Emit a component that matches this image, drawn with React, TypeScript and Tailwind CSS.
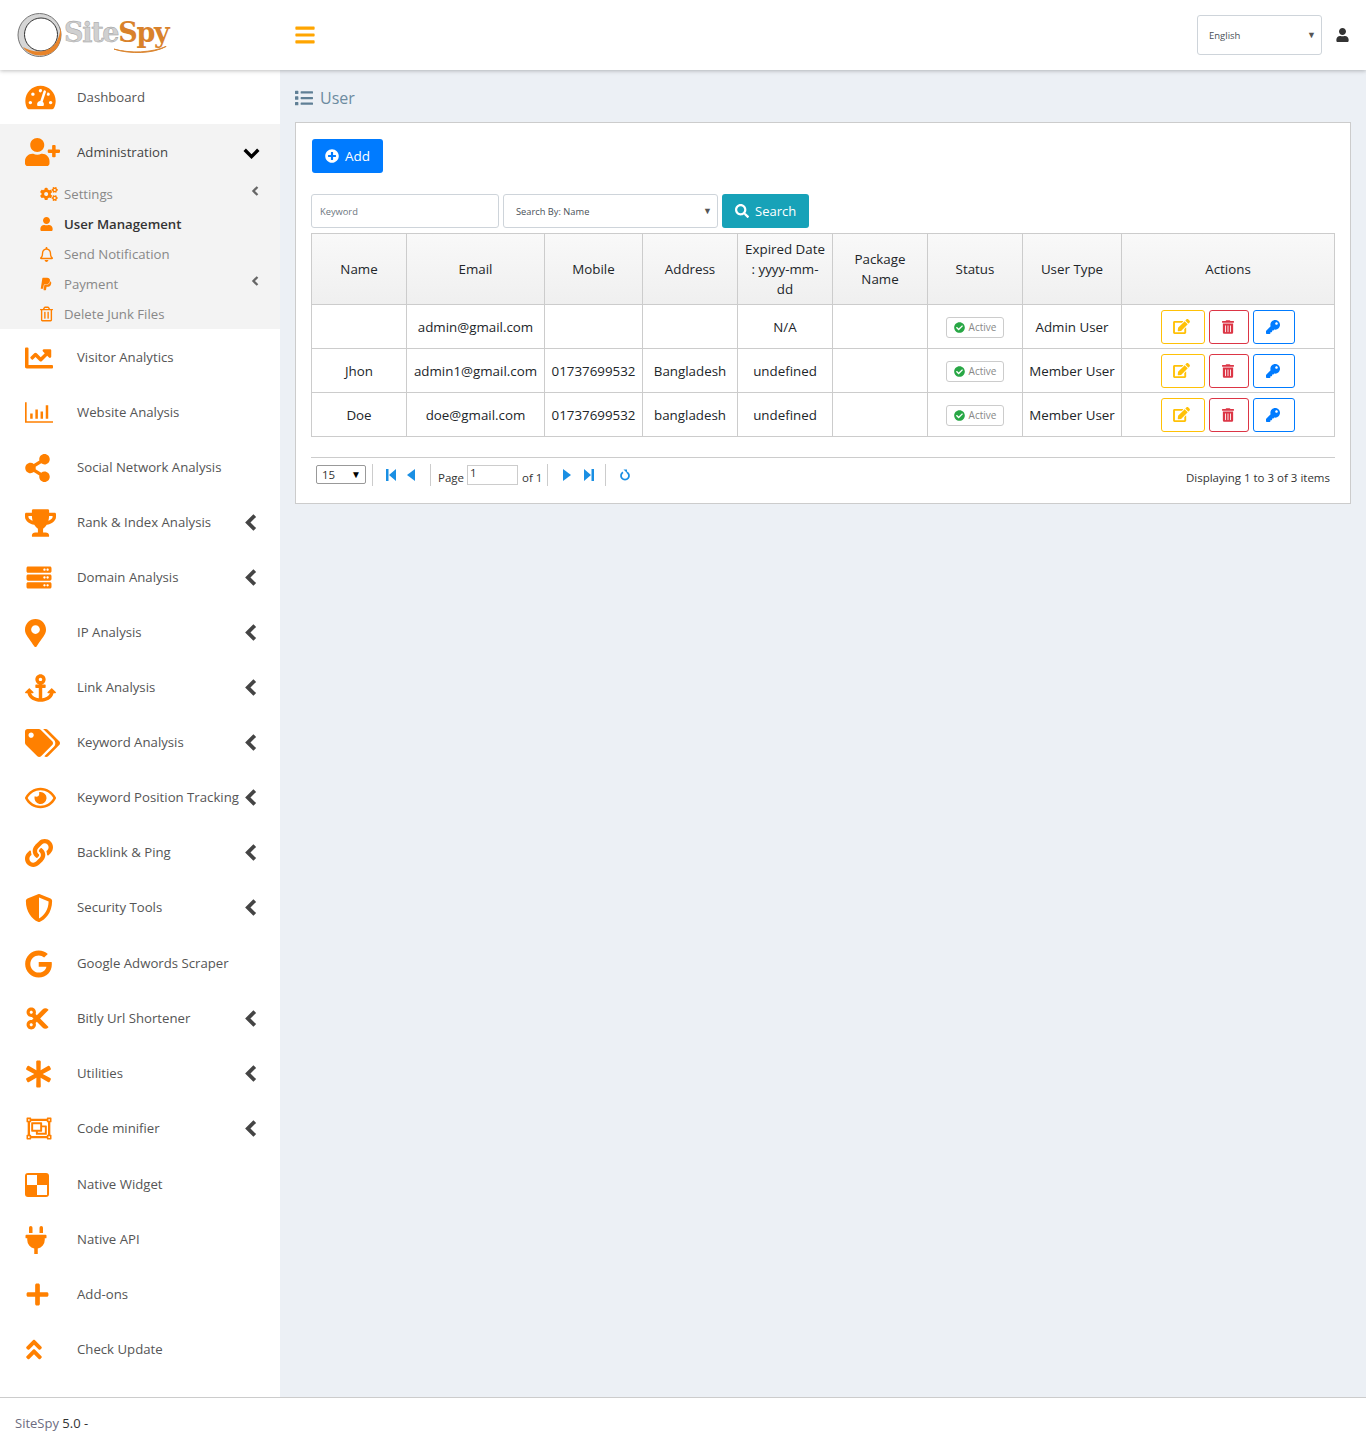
import type { ComponentType, ReactNode } from 'react'
import {
  FaAnchor,
  FaAngleDoubleUp,
  FaAsterisk,
  FaBars,
  FaCheckCircle,
  FaCogs,
  FaCut,
  FaEdit,
  FaRegEye,
  FaGoogle,
  FaKey,
  FaLink,
  FaList,
  FaMapMarkerAlt,
  FaPaypal,
  FaPlug,
  FaPlus,
  FaPlusCircle,
  FaRegBell,
  FaRegObjectGroup,
  FaRegTrashAlt,
  FaSearch,
  FaServer,
  FaShareAlt,
  FaShieldAlt,
  FaTachometerAlt,
  FaTags,
  FaTrashAlt,
  FaTrophy,
  FaUser,
  FaUserPlus,
  FaChartLine,
} from 'react-icons/fa'

type IconType = ComponentType<{ className?: string }>

function BarsIcon({ className }: { className?: string }) {
  return (
    <svg viewBox="0 0 27 20" className={className} fill="currentColor">
      <path d="M0 0h1.6v18.4H27V20H0z" />
      <path d="M5 11h2.4v5H5zM10 7h2.4v9H10zM15 9h2.4v7H15zM20 3h2.4v13H20z" />
    </svg>
  )
}

function CheckerIcon({ className }: { className?: string }) {
  return (
    <svg viewBox="0 0 24 24" className={className}>
      <rect width="24" height="24" rx="3" fill="currentColor" />
      <rect x="2" y="2" width="10" height="10" fill="#fff" />
      <rect x="12" y="12" width="10" height="10" fill="#fff" />
    </svg>
  )
}

function ChevronLeft({ className }: { className?: string }) {
  return (
    <svg viewBox="0 0 12 16" className={className} fill="none" stroke="currentColor" strokeWidth="3.6">
      <path d="M10 1.5 3.5 8l6.5 6.5" />
    </svg>
  )
}

function ChevronDown({ className }: { className?: string }) {
  return (
    <svg viewBox="0 0 16 11" className={className} fill="none" stroke="currentColor" strokeWidth="3.4">
      <path d="M1.2 1.8 8 8.6l6.8-6.8" />
    </svg>
  )
}

function PagerIcon({ d, className }: { d: string; className?: string }) {
  return (
    <svg viewBox="0 0 10 12" className={className} fill="currentColor">
      <path d={d} />
    </svg>
  )
}

function RefreshIcon({ className }: { className?: string }) {
  return (
    <svg viewBox="0 0 12 12" className={className}>
      <path d="M4 3.2a4 4 0 1 0 4 0" fill="none" stroke="currentColor" strokeWidth="1.8" />
      <path d="M4.5 0.5h3.5v3.5z" fill="currentColor" />
    </svg>
  )
}

const menu: { label: string; icon: IconType; size: string; arrow?: boolean; extra?: boolean }[] = [
  { label: 'Visitor Analytics', icon: FaChartLine, size: 'w-[28px] h-[28px]' },
  { label: 'Website Analysis', icon: BarsIcon, size: 'w-[28px] h-[21px]' },
  { label: 'Social Network Analysis', icon: FaShareAlt, size: 'w-[25px] h-[28px]' },
  { label: 'Rank & Index Analysis', icon: FaTrophy, size: 'w-[31px] h-[28px]', arrow: true },
  { label: 'Domain Analysis', icon: FaServer, size: 'w-[28px] h-[25px]', arrow: true },
  { label: 'IP Analysis', icon: FaMapMarkerAlt, size: 'w-[21px] h-[28px]', arrow: true },
  { label: 'Link Analysis', icon: FaAnchor, size: 'w-[31px] h-[28px]', arrow: true },
  { label: 'Keyword Analysis', icon: FaTags, size: 'w-[35px] h-[28px]', arrow: true },
  { label: 'Keyword Position Tracking', icon: FaRegEye, size: 'w-[31px] h-[28px]', arrow: true },
  { label: 'Backlink & Ping', icon: FaLink, size: 'w-[28px] h-[28px]', arrow: true },
  { label: 'Security Tools', icon: FaShieldAlt, size: 'w-[28px] h-[28px]', arrow: true },
  { label: 'Google Adwords Scraper', icon: FaGoogle, size: 'w-[27px] h-[28px]', extra: true },
  { label: 'Bitly Url Shortener', icon: FaCut, size: 'w-[25px] h-[25px]', arrow: true },
  { label: 'Utilities', icon: FaAsterisk, size: 'w-[27px] h-[28px]', arrow: true },
  { label: 'Code minifier', icon: FaRegObjectGroup, size: 'w-[28px] h-[25px]', arrow: true },
  { label: 'Native Widget', icon: CheckerIcon, size: 'w-[24px] h-[24px]', extra: true },
  { label: 'Native API', icon: FaPlug, size: 'w-[22px] h-[28px]' },
  { label: 'Add-ons', icon: FaPlus, size: 'w-[25px] h-[25px]' },
  { label: 'Check Update', icon: FaAngleDoubleUp, size: 'w-[18px] h-[25px]' },
]

const subMenu: { label: string; icon: IconType; size: string; arrow?: boolean; active?: boolean }[] = [
  { label: 'Settings', icon: FaCogs, size: 'w-[18px] h-[14px]', arrow: true },
  { label: 'User Management', icon: FaUser, size: 'w-[13px] h-[14px]', active: true },
  { label: 'Send Notification', icon: FaRegBell, size: 'w-[13px] h-[15px]' },
  { label: 'Payment', icon: FaPaypal, size: 'w-[12px] h-[14px]', arrow: true },
  { label: 'Delete Junk Files', icon: FaRegTrashAlt, size: 'w-[13px] h-[16px]' },
]

const users = [
  { name: '', email: 'admin@gmail.com', mobile: '', address: '', expired: 'N/A', type: 'Admin User' },
  { name: 'Jhon', email: 'admin1@gmail.com', mobile: '01737699532', address: 'Bangladesh', expired: 'undefined', type: 'Member User' },
  { name: 'Doe', email: 'doe@gmail.com', mobile: '01737699532', address: 'bangladesh', expired: 'undefined', type: 'Member User' },
]

function Logo() {
  return (
    <div className="flex items-center">
      <svg viewBox="0 0 46 46" className="w-[46px] h-[46px]">
        <circle cx="22.5" cy="23" r="21.5" fill="#d6d6d6" stroke="#777" strokeWidth="1" />
        <circle cx="24" cy="22.5" r="16.5" fill="#fff" stroke="#333" strokeWidth="1" />
        <path d="M6 35C13 46 34 47 41 34 44 28 45 22 43.500 15 43 26 38 38 24 39.500 17 40 11 38 6 35z" fill="#e8842a" />
      </svg>
      <div className="relative ml-[1px] font-['DejaVu_Serif',serif] text-[27px] leading-none font-bold tracking-[-1.3px] -mt-[6px]">
        <span className="text-[#d0d0d0] [-webkit-text-stroke:0.4px_#999]">Site</span>
        <span className="text-[#d9822b]">Spy</span>
        <svg viewBox="0 0 60 8" className="absolute right-0 -bottom-[8px] w-[54px] h-[8px]">
          <path d="M0 3c18 5 42 4 58-3-14 8-40 9-58 3z" fill="#d9822b" stroke="#d9822b" />
        </svg>
      </div>
    </div>
  )
}

function Th({ children }: { children: ReactNode }) {
  return <th className="border border-[#ccc] px-[7px] font-normal text-[13.35px] leading-[20px]">{children}</th>
}

function Td({ children, plain }: { children?: ReactNode; plain?: boolean }) {
  return (
    <td className={`border border-[#ccc] text-center text-[13.35px] whitespace-nowrap ${plain ? '' : 'pt-[2px]'}`}>
      {children}
    </td>
  )
}

function Sep() {
  return <span className="block w-px h-[22px] bg-[#ccc]" />
}

export default function App() {
  return (
    <div className="flex flex-col w-[1366px] h-[1448px] bg-[#ecf0f5] font-['Open_Sans',sans-serif] text-[#212529]">
      <header className="relative z-10 flex items-center h-[70px] shrink-0 bg-white shadow-[0_1px_4px_rgba(0,0,0,0.25)]">
        <div className="w-[295px] pl-[17px] shrink-0">
          <Logo />
        </div>
        <FaBars className="w-[20px] h-[22px] text-[#ffa500]" />
        <div className="ml-auto flex items-center justify-between w-[125px] h-[40px] pl-[11px] pr-[5px] bg-white border border-[#ced4da] rounded-[3px] text-[9.5px] text-[#495057]">
          <span className="mt-[2px]">English</span>
          <span className="text-[9px] text-[#555]">▼</span>
        </div>
        <FaUser className="w-[13px] h-[14px] ml-[14px] mr-[17px] text-[#333]" />
      </header>

      <div className="flex flex-1 min-h-0">
        <aside className="w-[280px] shrink-0 bg-white text-[13.2px] text-[#555]">
          <div className="flex items-center h-[54px] pl-[25px]">
            <span className="flex items-center w-[52px]">
              <FaTachometerAlt className="w-[31px] h-[27px] text-[#ff8000]" />
            </span>
            <span className="mt-[2px]">Dashboard</span>
          </div>
          <div className="h-[205px] bg-[#f3f3f3]">
            <div className="flex items-center h-[56px] pl-[25px] pr-[20px] text-[#444]">
              <span className="flex items-center w-[52px]">
                <FaUserPlus className="w-[35px] h-[28px] text-[#ff8000]" />
              </span>
              <span className="mt-[2px]">Administration</span>
              <ChevronDown className="ml-auto w-[17px] h-[11px] mt-[2px] text-black" />
            </div>
            <div className="-mt-px">
              {subMenu.map((s) => {
                const Icon = s.icon
                return (
                  <div key={s.label} className="flex items-center h-[30px] pl-[40px] pr-[21px]">
                    <span className="flex items-center w-[24px]">
                      <Icon className={`${s.size} text-[#ff8000]`} />
                    </span>
                    <span className={`mt-[2px] ${s.active ? 'font-semibold text-[#333]' : 'text-[#888]'}`}>
                      {s.label}
                    </span>
                    {s.arrow && <ChevronLeft className="ml-auto -mt-[6px] w-[8px] h-[10px] text-[#666]" />}
                  </div>
                )
              })}
            </div>
          </div>
          <div className="pt-px">
            {menu.map((m) => {
              const Icon = m.icon
              return (
                <div
                  key={m.label}
                  className={`flex items-center h-[55px] pl-[25px] pr-[23px] ${m.extra ? 'mt-px' : ''}`}
                >
                  <span className="flex items-center w-[52px] shrink-0">
                    <Icon className={`${m.size} text-[#ff8000]`} />
                  </span>
                  <span className="whitespace-nowrap">{m.label}</span>
                  {m.arrow && <ChevronLeft className="ml-auto w-[13px] h-[17px] text-[#444]" />}
                </div>
              )
            })}
          </div>
        </aside>

        <main className="flex-1 pl-[15px] pr-[15px]">
          <div className="flex items-center h-[52px] pt-[3px] text-[#6c8ba0]">
            <FaList className="w-[18px] h-[18px] mr-[7px] text-[#5f7f95]" />
            <span className="text-[16px]">User</span>
          </div>
          <section className="h-[382px] bg-white border border-[#ccc] px-[15px] pt-[16px]">
            <button className="flex items-center h-[34px] w-[71px] ml-px pl-[13px] rounded-[3px] bg-[#007bff] text-white text-[13.5px]">
              <FaPlusCircle className="w-[14px] h-[14px] mr-[6px]" />
              Add
            </button>
            <div className="flex gap-[4px] mt-[21px]">
              <div className="flex items-center w-[188px] h-[34px] pl-[8px] bg-white border border-[#ced4da] rounded-[3px] text-[9.3px] text-[#6c757d]">
                <span className="mt-[2px]">Keyword</span>
              </div>
              <div className="flex items-center justify-between w-[215px] h-[34px] pl-[12px] pr-[5px] bg-white border border-[#ced4da] rounded-[3px] text-[9.3px] text-[#495057]">
                <span className="mt-[2px]">Search By: Name</span>
                <span className="text-[9px] text-[#555]">▼</span>
              </div>
              <button className="flex items-center w-[87px] h-[34px] pl-[13px] rounded-[3px] bg-[#17a2b8] text-white text-[13px]">
                <FaSearch className="w-[14px] h-[14px] mr-[6px]" />
                <span className="mt-[2px]">Search</span>
              </button>
            </div>
            <table className="mt-[5px] w-[1023px] table-fixed border-collapse">
              <colgroup>
                <col className="w-[95px]" />
                <col className="w-[138px]" />
                <col className="w-[98px]" />
                <col className="w-[95px]" />
                <col className="w-[95px]" />
                <col className="w-[95px]" />
                <col className="w-[95px]" />
                <col className="w-[99px]" />
                <col className="w-[213px]" />
              </colgroup>
              <thead>
                <tr className="h-[71px] bg-gradient-to-b from-[#f9f9f9] to-[#efefef]">
                  <Th>Name</Th>
                  <Th>Email</Th>
                  <Th>Mobile</Th>
                  <Th>Address</Th>
                  <Th>Expired Date : yyyy-mm-dd</Th>
                  <Th>Package Name</Th>
                  <Th>Status</Th>
                  <Th>User Type</Th>
                  <Th>Actions</Th>
                </tr>
              </thead>
              <tbody>
                {users.map((u) => (
                  <tr key={u.email} className="h-[44px]">
                    <Td>{u.name}</Td>
                    <Td>{u.email}</Td>
                    <Td>{u.mobile}</Td>
                    <Td>{u.address}</Td>
                    <Td>{u.expired}</Td>
                    <Td />
                    <Td>
                      <span className="inline-flex items-center h-[21px] px-[7px] border border-[#ccc] rounded-[3px] text-[10px] text-[#888]">
                        <FaCheckCircle className="w-[11px] h-[11px] mr-[4px] text-[#28a745]" />
                        Active
                      </span>
                    </Td>
                    <Td>{u.type}</Td>
                    <Td plain>
                      <div className="flex justify-center gap-[4px] pr-[1px]">
                        <span className="flex items-center justify-center w-[44px] h-[34px] pr-[2px] border border-[#ffc107] rounded-[3px] text-[#ffc107]">
                          <FaEdit className="w-[17px] h-[15px]" />
                        </span>
                        <span className="flex items-center justify-center w-[40px] h-[34px] pr-[2px] border border-[#dc3545] rounded-[3px] text-[#dc3545]">
                          <FaTrashAlt className="w-[12px] h-[14px]" />
                        </span>
                        <span className="flex items-center justify-center w-[42px] h-[34px] pr-[2px] border border-[#007bff] rounded-[3px] text-[#007bff]">
                          <FaKey className="w-[14px] h-[14px]" />
                        </span>
                      </div>
                    </Td>
                  </tr>
                ))}
              </tbody>
            </table>
            <div className="flex items-center h-[34px] mt-[20px] w-[1024px] border-t border-[#ccc] pl-[5px] pr-[5px] text-[11.5px] text-[#333]">
              <div className="flex items-center justify-between w-[50px] h-[19px] pl-[5px] pr-[4px] border border-[#999] rounded-[2px] mr-[6px]">
                <span>15</span>
                <span className="text-[10px] text-black">▼</span>
              </div>
              <Sep />
              <PagerIcon d="M0 0h2.500v12H0zM10 0v12L3 6z" className="w-[10px] h-[12px] ml-[13px] text-[#1a8fe3]" />
              <PagerIcon d="M8 0v12L0 6z" className="w-[10px] h-[12px] ml-[11px] text-[#1a8fe3]" />
              <span className="ml-[13px]">
                <Sep />
              </span>
              <span className="ml-[7px] mt-[6px]">Page</span>
              <span className="flex w-[51px] h-[20px] ml-[3px] pl-[2px] border border-[#ccc] leading-[14px]">1</span>
              <span className="ml-[4px] mt-[6px]">of 1</span>
              <span className="ml-[5px]">
                <Sep />
              </span>
              <PagerIcon d="M0 0v12L8 6z" className="w-[10px] h-[12px] ml-[15px] text-[#1a8fe3]" />
              <PagerIcon d="M0 0v12L7 6zM7.500 0H10v12H7.500z" className="w-[10px] h-[12px] ml-[11px] text-[#1a8fe3]" />
              <span className="ml-[11px]">
                <Sep />
              </span>
              <RefreshIcon className="w-[12px] h-[12px] ml-[13px] text-[#1a8fe3]" />
              <span className="ml-auto mt-[7px]">Displaying 1 to 3 of 3 items</span>
            </div>
          </section>
        </main>
      </div>

      <footer className="flex items-center h-[51px] shrink-0 bg-white border-t border-[#ccc] pt-[2px] pl-[15px] text-[13px] text-[#333]">
        <span className="text-[#6c6c80]">SiteSpy</span>&nbsp;5.0 -
      </footer>
    </div>
  )
}
